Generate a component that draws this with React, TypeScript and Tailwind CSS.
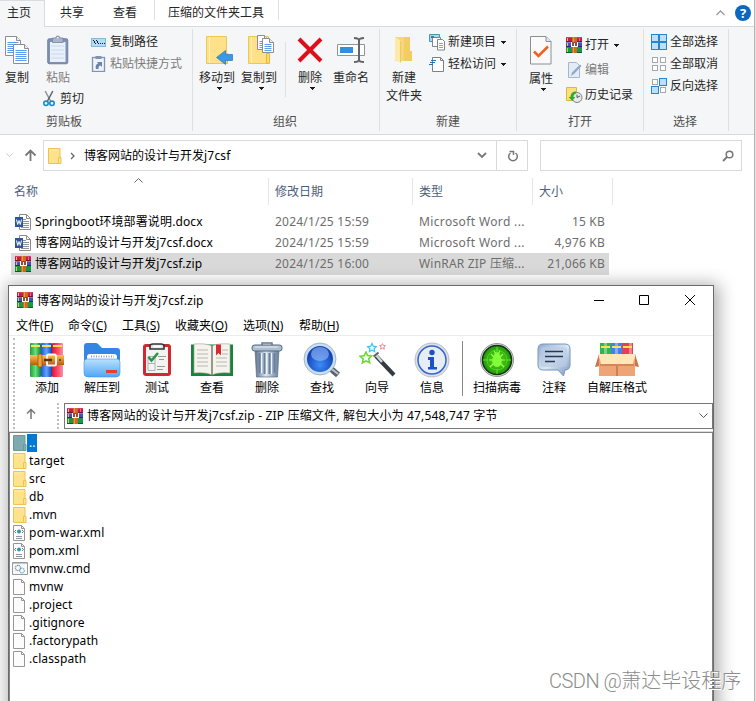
import type { ReactNode } from "react";

type IconProps = { className?: string };

/* ---------- shared glyphs ---------- */

function Books({ className = "" }: IconProps) {
  return (
    <svg width="16" height="16" viewBox="0 0 16 16" className={"shrink-0 " + className} shapeRendering="crispEdges">
      <rect y="0" width="16" height="5" fill="#c21d4c" />
      <rect y="0" width="16" height="1" fill="#d94067" />
      <rect y="5" width="16" height="5" fill="#4b4fb8" />
      <rect y="5" width="16" height="1" fill="#7a7edb" />
      <rect y="10" width="16" height="6" fill="#16994a" />
      <rect y="15" width="16" height="1" fill="#0b5a2b" />
      <rect y="4" width="16" height="1" fill="#7a1033" />
      <rect y="9" width="16" height="1" fill="#25286e" />
      <rect x="1" y="1" width="1" height="3" fill="#f2c14a" />
      <rect x="1" y="6" width="1" height="3" fill="#f2c14a" />
      <rect x="1" y="11" width="1" height="4" fill="#f2c14a" />
      <rect x="13" y="1" width="1" height="3" fill="#e56a86" />
      <rect x="6" y="0" width="5" height="16" fill="#cf6a20" />
      <rect x="7" y="0" width="1" height="16" fill="#e99a45" />
      <rect x="5" y="5" width="7" height="5" fill="#8a5138" />
      <path d="M5 5h1v5h-1zM11 5h1v5h-1zM8 6h1v3h-1zM6 9h5v1h-5z" fill="#fff" />
    </svg>
  );
}

function Folder({ w = 14, h = 16, teal = false }: { w?: number; h?: number; teal?: boolean }) {
  const fill = teal ? "#7fabb0" : "#ffe28c";
  const edge = teal ? "#6b9a95" : "#ecc453";
  return (
    <svg width={w} height={h} viewBox="0 0 14 16" className="shrink-0" preserveAspectRatio="none">
      <path d="M.5 .5h11.5v15H.5z" fill={fill} stroke={edge} />
      <path d="M10.5 9.5h2.5v6h-2.5z" fill={fill} stroke={edge} />
      {!teal && <path d="M1.5 1.5h9v1h-9z" fill="#ffedb0" />}
    </svg>
  );
}

function BigFolder({ children }: { children?: ReactNode }) {
  return (
    <svg width="28" height="32" viewBox="0 0 28 32" className="ml-[4px] shrink-0">
      <path d="M1.5 2.5h20v27h-20z" fill="#ffe18a" stroke="#edc850" />
      <path d="M4.5 3v26" stroke="#fff0bd" />
      <path d="M19.5 19.500h3v10h-3z" fill="#ffd968" stroke="#e5b93b" />
      {children}
    </svg>
  );
}

function Caret() {
  return (
    <svg width="5" height="3" viewBox="0 0 5 3" className="shrink-0" shapeRendering="crispEdges">
      <path d="M0 0h5v1H0zM1 1h3v1H1zM2 2h1v1H2z" fill="#1b1b1b" />
    </svg>
  );
}

function Sheet({ x, y, w = 15, h = 19 }: { x: number; y: number; w?: number; h?: number }) {
  const rows = [6.5, 8.5, 10.5, 12.5, 14.5, 16.5].filter((r) => r < h - 2);
  return (
    <g transform={`translate(${x} ${y})`}>
      <path d={`M.5 .5h${w - 5}l4 4v${h - 5}h-${w - 1}z`} fill="#fff" stroke="#8b8f95" />
      <path d={`M${w - 4.5} .5v4h4`} fill="#e9ebee" stroke="#8b8f95" />
      {rows.map((r) => (
        <path key={r} d={`M2.500 ${r}h${w - 5}`} stroke="#5b9cf0" />
      ))}
    </g>
  );
}

function CopyIcon() {
  return (
    <svg width="26" height="30" viewBox="0 0 26 30">
      <Sheet x={1} y={1} w={16} h={20} />
      <Sheet x={9} y={9} w={16} h={20} />
    </svg>
  );
}

function PasteIcon() {
  return (
    <svg width="22" height="30" viewBox="0 0 22 30">
      <rect x=".75" y="3.75" width="20" height="25" rx="1.5" fill="#7d91b8" stroke="#71819f" />
      <path d="M3 7h15.500v20H3z" fill="#e9f0fa" />
      <path d="M4 11h13M4 15h13M4 19h13M4 23h13" stroke="#d3deef" strokeWidth="1.5" />
      <path d="M5.500 3h3.300a2 2 0 0 1 4 0h3.300v4.500H5.500z" fill="#a9b7cc" stroke="#74839d" strokeWidth=".8" />
      <circle cx="10.800" cy="2.800" r=".8" fill="#fff" />
    </svg>
  );
}

function PathIcon() {
  return (
    <svg width="16" height="16" viewBox="0 0 16 16" shapeRendering="crispEdges">
      <rect x=".5" y="4.500" width="14" height="8" fill="#b3dcf8" stroke="#84b9dc" />
      <path d="M2 6h1v1h1v2h1v1H4V9H3V7H2zM5 6h1v1h1v2h1v1H7V9H6V7H5zM9 9h1v1H9zM11 9h1v1h-1zM13 9h1v1h-1z" fill="#16202b" />
    </svg>
  );
}

function ShortcutIcon() {
  return (
    <svg width="16" height="16" viewBox="0 0 16 16">
      <rect x="1.500" y="1.500" width="12" height="14" fill="#eef3fa" stroke="#8192b3" strokeWidth="1.300" />
      <path d="M4.500 0h6v3h-6z" fill="#8192b3" />
      <path d="M5 13c-.8-3 .2-5.500 2.500-5.500L6 6h5v5L9.500 9.500C8 9.500 7.500 11 7.500 13z" fill="#6d82ad" />
    </svg>
  );
}

function CutIcon() {
  return (
    <svg width="12" height="17" viewBox="0 0 12 17" fill="none">
      <path d="M2.200 1L7.500 11" stroke="#8b9299" strokeWidth="1.500" />
      <path d="M9.800 1L4.500 11" stroke="#59636d" strokeWidth="1.500" />
      <circle cx="3" cy="13.300" r="2.200" stroke="#1c8ac9" strokeWidth="1.600" />
      <circle cx="9" cy="13.300" r="2.200" stroke="#1c8ac9" strokeWidth="1.600" />
    </svg>
  );
}

function DeleteX() {
  return (
    <svg width="26" height="26" viewBox="0 0 26 26">
      <path d="M2 2L24 24M24 2L2 24" stroke="#dc0f1a" strokeWidth="4" />
    </svg>
  );
}

function RenameIcon() {
  return (
    <svg width="28" height="28" viewBox="0 0 28 28" fill="none">
      <path d="M.5 8.500h27v11H.5z" fill="#fff" stroke="#8f9499" />
      <path d="M3 11h13v6H3z" fill="#2e8fe3" />
      <path d="M22 3v22" stroke="#62666a" strokeWidth="2" />
      <path d="M17 2c3 0 5 .5 5 2.500 0-2 2-2.500 5-2.500M17 26c3 0 5-.5 5-2.500 0 2 2 2.500 5 2.500" stroke="#62666a" strokeWidth="2" />
    </svg>
  );
}

function NewFolderIcon() {
  return (
    <svg width="20" height="28" viewBox="0 0 20 28">
      <path d="M1 1h15v14h2v10H1z" fill="#f6d778" />
      <path d="M10 1h6v14h2v10h-8z" fill="#f2cd64" />
      <path d="M1 1l6 4v22l-6-3z" fill="#ffe9a9" />
      <path d="M6.500 5v21.500" stroke="#e9c258" strokeWidth=".8" />
    </svg>
  );
}

function NewItemIcon() {
  return (
    <svg width="17" height="17" viewBox="0 0 17 17">
      <path d="M.5 .5h10v7H.5z" fill="#a9d8ea" stroke="#4b93b4" />
      <path d="M3.500 3.500h8v9h-8z" fill="#fff" stroke="#7f858b" />
      <path d="M8.500 5.500h5l2 2v8.500h-7z" fill="#fff" stroke="#7f858b" />
      <path d="M10 9.500h4M10 11.500h4M10 13.500h4" stroke="#d58888" />
      <path d="M2 2h3v2H2z" fill="#347d9d" />
    </svg>
  );
}

function EasyAccessIcon() {
  return (
    <svg width="17" height="17" viewBox="0 0 17 17" fill="none">
      <path d="M3.500 1.500h8l3 3v11h-11z" fill="#fff" stroke="#7c8187" />
      <path d="M11.500 1.500v3h3" stroke="#7c8187" />
      <path d="M2 4.500h5M1 6.500h5M0 8.500h4" stroke="#2373b9" />
    </svg>
  );
}

function PropertiesIcon() {
  return (
    <svg width="22" height="29" viewBox="0 0 22 29" fill="none">
      <path d="M.5 .5h15.500l5 5v22.500H.5z" fill="#fafafa" stroke="#8b8e92" />
      <path d="M16 .5v5h5" fill="#e4e6e8" stroke="#8b8e92" />
      <path d="M4 15.500l4.500 4.500L18 10.500" stroke="#f1621e" strokeWidth="2.600" />
    </svg>
  );
}

function EditIcon() {
  return (
    <svg width="16" height="16" viewBox="0 0 16 16" fill="none" className="ml-[1px]">
      <path d="M1.500 .5h8l3 3v12h-11z" fill="#e4ebf5" stroke="#a5b6cf" />
      <path d="M14.500 4L7 12l-3 2 1-3.500L13 2.500z" fill="#93a8c9" />
    </svg>
  );
}

function HistoryIcon() {
  return (
    <svg width="17" height="16" viewBox="0 0 17 16">
      <path d="M.5 .5h10v13H.5z" fill="#fde07c" stroke="#dcb644" />
      <circle cx="11" cy="10.500" r="5" fill="#e7e9eb" stroke="#7e8387" />
      <path d="M11 7.500v3l3-1.500" fill="none" stroke="#50565b" />
      <path d="M10 4.500C6 4.500 4.500 7 4.500 10H2.500l3.800 4 3-4H7.500c0-2 1-3 2.500-3.500z" fill="#35a936" />
    </svg>
  );
}

const gridCells = [
  { on: [0.5, 0.5], off: [1.5, 1.5] },
  { on: [8.5, 0.5], off: [9.5, 1.5] },
  { on: [0.5, 8.5], off: [1.5, 9.5] },
  { on: [8.5, 8.5], off: [9.5, 9.5] },
];

function GridIcon({ on }: { on: boolean[] }) {
  const full = on.every(Boolean);
  return (
    <svg width="16" height="16" viewBox="0 0 16 16" shapeRendering="crispEdges">
      {gridCells.map((c, i) =>
        on[i] ? (
          <rect key={i} x={c.on[0]} y={c.on[1]} width={full ? 7 : 6.500} height={full ? 7 : 6.500} fill="#bce0fb" stroke="#2585cf" />
        ) : (
          <rect key={i} x={c.off[0]} y={c.off[1]} width="5" height="5" fill="#fff" stroke="#a5a9ad" />
        )
      )}
    </svg>
  );
}

function WordIcon() {
  return (
    <svg width="16" height="16" viewBox="0 0 16 16" className="shrink-0">
      <path d="M4.500 .5h7l4 4v11h-11z" fill="#fff" stroke="#8a8a8a" />
      <path d="M11.500 .5v4h4" fill="none" stroke="#8a8a8a" />
      <path d="M8 5.500h3M8 7.500h6M8 9.500h6M8 11.500h6M6 13.500h8" stroke="#8d949b" />
      <path d="M0 3h8v10H0z" fill="#2b579a" />
      <path d="M1.500 5.500l1.200 5L4 6.500l1.300 4 1.200-5" fill="none" stroke="#fff" />
    </svg>
  );
}

/* ---------- archive toolbar pictures ---------- */

function AddIcon() {
  return (
    <svg width="36" height="36" viewBox="0 0 36 36">
      <defs>
        <linearGradient id="bg"><stop stopColor="#1f9d3d" /><stop offset=".5" stopColor="#65e07a" /><stop offset="1" stopColor="#148034" /></linearGradient>
        <linearGradient id="bb"><stop stopColor="#1d55d9" /><stop offset=".5" stopColor="#5ea2ff" /><stop offset="1" stopColor="#1743b0" /></linearGradient>
        <linearGradient id="br"><stop stopColor="#d71533" /><stop offset=".5" stopColor="#ff4967" /><stop offset="1" stopColor="#f590b0" /></linearGradient>
        <linearGradient id="belt" x2="0" y2="1"><stop stopColor="#ffc251" /><stop offset="1" stopColor="#b65d11" /></linearGradient>
      </defs>
      <rect x="1" y="1" width="11" height="34" rx="1" fill="url(#bg)" />
      <rect x="12" y="1" width="11" height="34" rx="1" fill="url(#bb)" />
      <rect x="23" y="1" width="11" height="34" rx="1" fill="url(#br)" />
      <path d="M2 4h9M13 4h9M24 4h9" stroke="#ffe155" strokeWidth="2" />
      <path d="M1 13h34v10H1z" fill="url(#belt)" />
      <rect x="9" y="12" width="4" height="13" rx="1.500" fill="#f0a03a" stroke="#8d4a0c" strokeWidth=".6" />
      <rect x="18" y="12.500" width="9" height="11" rx="1.500" fill="none" stroke="#f5f5f5" strokeWidth="2" />
      <path d="M15 18h8" stroke="#5c3310" strokeWidth="2.500" />
      <circle cx="31" cy="18" r="1" fill="#5c3310" />
    </svg>
  );
}

function ExtractIcon() {
  return (
    <svg width="38" height="36" viewBox="0 0 38 36">
      <defs>
        <linearGradient id="fo" x2="0" y2="1"><stop stopColor="#b9e2fd" /><stop offset="1" stopColor="#4fa6f4" /></linearGradient>
      </defs>
      <path d="M1 4q0-3 3-3h9q2 0 4 3l2 2h15q3 0 3 3v15H1z" fill="#3585e5" />
      <path d="M4 15q0-3 3-3h24q3 0 3 3v4H4z" fill="#fff" />
      <path d="M8 14.500h23" stroke="#8fa0b4" strokeWidth="2" strokeDasharray="1 1.500" />
      <path d="M1 20q0-3 3-3h30q3 0 3 3v11q0 4-4 4H5q-4 0-4-4z" fill="url(#fo)" stroke="#3f94e6" strokeWidth=".6" />
      <rect x="23" y="28" width="11" height="3" fill="#e3412c" />
    </svg>
  );
}

function TestIcon() {
  return (
    <svg width="30" height="36" viewBox="0 0 30 36" fill="none">
      <rect x="1" y="2" width="28" height="32" rx="3" fill="#d32630" />
      <path d="M4 5h22v26H4z" fill="#f3f3f2" />
      <path d="M8 7V4q0-2 3-2h8q3 0 3 2v3z" fill="#dedede" stroke="#353638" strokeWidth="1.600" />
      <path d="M11 4.500h8" stroke="#fff" strokeWidth="2" />
      <path d="M6 14.500h7v7H6zM6 21.500h7v7H6z" stroke="#aeb1b2" />
      <path d="M6.500 15l3 3.500L16 11" stroke="#2c944a" strokeWidth="2.600" />
      <path d="M16 14.500h8M17 17.500h5M15 24.500h8M15 27.500h6" stroke="#97999a" />
    </svg>
  );
}

function ViewIcon() {
  return (
    <svg width="44" height="36" viewBox="0 0 44 36" fill="none">
      <path d="M1 2.500h42V34H1z" fill="#16843a" />
      <path d="M4 2q12-1 18 2 6-3 18-2v29q-12-1-18 2-6-3-18-2z" fill="#f4f3ed" stroke="#9f9c8f" strokeWidth=".6" />
      <path d="M22 4v29" stroke="#7b7768" strokeWidth="1.500" />
      <path d="M7 8h11M7 12h11M7 16h11M7 20h11M7 24h11M26 16h11M26 20h11M26 24h11M32 8h6M32 12h6" stroke="#b8b8b3" />
      <path d="M26 2.500h5v11l-2.500-2.500L26 13.500z" fill="#d62c31" />
    </svg>
  );
}

function TrashIcon() {
  return (
    <svg width="32" height="36" viewBox="0 0 32 36" fill="none">
      <defs>
        <linearGradient id="tr"><stop stopColor="#596f8c" /><stop offset=".45" stopColor="#dce7f1" /><stop offset="1" stopColor="#657c9a" /></linearGradient>
      </defs>
      <path d="M11 3V1h10v2" stroke="#66768a" strokeWidth="1.500" />
      <path d="M4 7h24l-1.500 28H5.500z" fill="url(#tr)" stroke="#5c6f86" strokeWidth=".7" />
      <path d="M8.500 11v20M13.500 11v21M18.500 11v21M23.500 11v20" stroke="#6b809a" strokeWidth="2" />
      <path d="M10.500 11v20M15.500 11v21M20.500 11v21" stroke="#eef5fb" />
      <rect x="1" y="3" width="30" height="6" rx="2.500" fill="#aebfd1" stroke="#52657c" />
      <path d="M4 5h23" stroke="#e7eef5" />
    </svg>
  );
}

function FindIcon() {
  return (
    <svg width="38" height="36" viewBox="0 0 38 36" fill="none">
      <defs>
        <radialGradient id="le" cy=".7"><stop stopColor="#3c8df7" /><stop offset="1" stopColor="#1643b8" /></radialGradient>
      </defs>
      <path d="M26 25l9 8" stroke="#58616c" strokeWidth="6" />
      <path d="M25 24l10 8" stroke="#bac3cd" strokeWidth="2" />
      <circle cx="17" cy="17" r="14.500" fill="url(#le)" stroke="#c7dff0" strokeWidth="3" />
      <circle cx="17" cy="17" r="16" stroke="#939ead" strokeWidth=".7" />
      <ellipse cx="17" cy="12" rx="9" ry="7" fill="#8fb9f6" opacity=".65" />
    </svg>
  );
}

function WizardIcon() {
  return (
    <svg width="38" height="36" viewBox="0 0 38 36" fill="none" className="ml-[2px]">
      <path d="M17 14l18 19" stroke="#353a3f" strokeWidth="4" />
      <path d="M17 13l6 7" stroke="#d5d8da" strokeWidth="2.500" />
      <path d="M14.500 14.500l5-4" stroke="#5c6268" strokeWidth="2" />
      <path d="M7 10l1.600 3.600 4 .4-2.900 2.800 1 4-3.700-1.900-3.600 2.100.8-4.100L1 14.200l4.200-.5z" fill="#f3fff2" stroke="#69d82f" strokeWidth="1.500" />
      <path d="M13 1.500l1.300 2.700 3 .4-2.200 2.100.6 3-2.700-1.400-2.700 1.400.6-3-2.200-2.100 3-.4z" fill="#edfcff" stroke="#46bce7" strokeWidth="1.200" />
      <path d="M23.500 1.500l.8 1.900 2.100.2-1.500 1.500.4 2.100-1.800-1-1.900 1 .4-2.100-1.500-1.500 2.100-.2z" fill="#fff1f1" stroke="#ee8d8d" />
    </svg>
  );
}

function InfoIcon() {
  return (
    <svg width="36" height="36" viewBox="0 0 36 36" fill="none">
      <circle cx="18" cy="18" r="17" fill="#dce1e8" stroke="#aab3bf" strokeWidth=".8" />
      <circle cx="18" cy="18" r="14" fill="#e6edf5" stroke="#3665c5" strokeWidth="1.500" />
      <circle cx="18" cy="10.500" r="2.700" fill="#1c51c3" />
      <path d="M14 15h6v10h3v2.500h-9V25h2v-7h-2z" fill="#1c51c3" />
    </svg>
  );
}

function VirusIcon() {
  return (
    <svg width="36" height="36" viewBox="0 0 36 36" fill="none">
      <defs><radialGradient id="vi"><stop stopColor="#58dd16" /><stop offset="1" stopColor="#1f9a0c" /></radialGradient></defs>
      <circle cx="18" cy="18" r="16.500" fill="#dadddf" stroke="#777c80" strokeWidth=".8" />
      <circle cx="18" cy="18" r="14.500" fill="url(#vi)" stroke="#173311" strokeWidth="1.600" />
      <circle cx="18" cy="18" r="10" stroke="#68d534" strokeWidth=".7" />
      <path d="M18 5v5M18 27v5M4 18h5M27 18h5" stroke="#65e32d" />
      <path d="M12 12l3 3M24 12l-3 3M10 18h4M26 18h-4M11 25l4-4M25 25l-4-4M15 9l2 3M21 9l-2 3" stroke="#9dff51" strokeWidth="1.200" />
      <ellipse cx="18" cy="19" rx="4.800" ry="6" fill="#82ff39" />
      <circle cx="18" cy="13" r="2.800" fill="#82ff39" />
    </svg>
  );
}

function CommentIcon() {
  return (
    <svg width="34" height="36" viewBox="0 0 34 36" fill="none">
      <defs><linearGradient id="co" x2="1" y2="1"><stop stopColor="#8fabd0" /><stop offset=".5" stopColor="#dce8f5" /><stop offset="1" stopColor="#7592bd" /></linearGradient></defs>
      <path d="M6 2h22q5 0 5 5v16q0 5-5 5l-1.500 6-5.500-6H6q-5 0-5-5V7q0-5 5-5z" fill="url(#co)" stroke="#7b96bb" />
      <rect x="4" y="5" width="26" height="20" rx="3" fill="#b9cbe2" opacity=".65" />
      <path d="M8 9.500h18M8 14.500h18M8 19.500h10" stroke="#273955" strokeWidth="1.500" />
    </svg>
  );
}

function SfxIcon() {
  return (
    <svg width="44" height="36" viewBox="0 0 44 36">
      <path d="M5 1h11v16H5z" fill="#2bb84b" />
      <path d="M16 1h11v16H16z" fill="#3f82ee" />
      <path d="M27 1h11v16H27z" fill="#e53f58" />
      <path d="M9 1h3v13H9zM20 1h3v13h-3zM34 1h3v13h-3z" fill="#fff" opacity=".35" />
      <path d="M6 5h9M17 5h9M28 5h9" stroke="#ffe057" strokeWidth="2" />
      <path d="M4 12L0 25l5-1zM40 12l4 13-5-1z" fill="#c7754f" />
      <path d="M4 17h36v17H4z" fill="#efa476" />
      <path d="M22 22v12" stroke="#a85d35" />
      <path d="M4 12h36l-2 10H6z" fill="#ffe7b7" />
      <path d="M5 22h34v2H5z" fill="#d48759" />
    </svg>
  );
}

/* ---------- ribbon building blocks ---------- */

function Small({ icon, label, caret, dim, className = "" }: { icon: ReactNode; label: string; caret?: boolean; dim?: boolean; className?: string }) {
  return (
    <div className={"flex h-[22px] items-center " + className}>
      <span className="flex w-[19px] shrink-0">{icon}</span>
      <span className={dim ? "text-[#7b7b7b]" : ""}>{label}</span>
      {caret && <span className="ml-[5px]"><Caret /></span>}
    </div>
  );
}

function Large({ icon, label, caret, dim, className = "" }: { icon: ReactNode; label: ReactNode; caret?: boolean; dim?: boolean; className?: string }) {
  return (
    <div className={"flex shrink-0 flex-col items-center pt-[5px] " + className}>
      <span className="mb-[2px] flex h-[35px] items-center justify-center">{icon}</span>
      <span className={"text-center leading-[18px] " + (dim ? "text-[#7b7b7b]" : "")}>{label}</span>
      {caret && <span className="ml-[4px] flex"><Caret /></span>}
    </div>
  );
}

function Group({ label, className, labelClass = "", children }: { label: string; className: string; labelClass?: string; children: ReactNode }) {
  return (
    <div className={"mt-[2px] flex h-[102px] shrink-0 flex-col border-r border-[#dfe0e1] " + className}>
      <div className="-mt-[2px] flex h-[87px]">{children}</div>
      <div className={"h-[18px] text-center leading-[18px] text-[#4f4f4f] " + labelClass}>{label}</div>
    </div>
  );
}

function Ribbon() {
  return (
    <div className="flex h-[108px] border-b border-[#d9dadb] bg-[#f5f6f7]">
      <Group label="剪贴板" className="w-[193px]" labelClass="pr-[64px]">
        <Large icon={<CopyIcon />} label="复制" className="ml-1 w-[26px]" />
        <div className="ml-[13px] w-[48px]">
          <Large icon={<PasteIcon />} label="粘贴" dim className="w-[30px]" />
          <div className="flex h-[23px] items-center">
            <CutIcon /><span className="ml-[5px]">剪切</span>
          </div>
        </div>
        <div className="pt-[4px]">
          <Small icon={<PathIcon />} label="复制路径" />
          <Small icon={<ShortcutIcon />} label="粘贴快捷方式" dim />
        </div>
      </Group>
      <Group label="组织" className="w-[187px]" labelClass="pr-[2px]">
        <Large className="ml-[3px] w-[42px]" caret label="移动到" icon={
          <BigFolder><path d="M27.500 20.500v6h-7v4l-9-7 9-7v4z" fill="#3b98e8" stroke="#1d78c6" strokeWidth=".7" /></BigFolder>
        } />
        <Large className="w-[42px]" caret label="复制到" icon={
          <BigFolder><g transform="translate(10 0)"><Sheet x={0} y={1} w={12} h={15} /><Sheet x={5} y={4} w={12} h={15} /></g></BigFolder>
        } />
        <div className="mt-[15px] ml-[5px] h-[55px] w-px bg-[#dfe0e1]" />
        <Large className="ml-[9px] w-[30px]" caret label="删除" icon={<DeleteX />} />
        <Large className="ml-[5px] w-[42px]" label="重命名" icon={<RenameIcon />} />
      </Group>
      <Group label="新建" className="w-[137px]">
        <Large className="ml-[3px] w-[42px]" label={<>新建<br />文件夹</>} icon={<NewFolderIcon />} />
        <div className="ml-[4px] pt-[4px]">
          <Small icon={<NewItemIcon />} label="新建项目" caret />
          <Small icon={<EasyAccessIcon />} label="轻松访问" caret />
        </div>
      </Group>
      <Group label="打开" className="w-[127px]">
        <Large className="ml-[8px] w-[32px] pt-[6px]" caret label="属性" icon={<PropertiesIcon />} />
        <div className="ml-[9px] flex flex-col gap-[3px] pt-[7px]">
          <Small icon={<Books />} label="打开" caret />
          <Small icon={<EditIcon />} label="编辑" dim />
          <Small icon={<HistoryIcon />} label="历史记录" />
        </div>
      </Group>
      <Group label="选择" className="w-[85px]" labelClass="pr-[2px]">
        <div className="ml-[7px] pt-[4px]">
          <Small icon={<GridIcon on={[true, true, true, true]} />} label="全部选择" />
          <Small icon={<GridIcon on={[false, false, false, false]} />} label="全部取消" />
          <Small icon={<GridIcon on={[false, true, true, false]} />} label="反向选择" />
        </div>
      </Group>
    </div>
  );
}

function Tabs() {
  return (
    <div className="flex h-[27px] items-stretch leading-[25px]">
      <div className="w-[45px] border-t border-r border-[#dadbdc] bg-[#f5f6f7] pl-[7px] leading-[23px]">主页</div>
      <div className="flex flex-1 border-b border-[#dadbdc]">
        <span className="ml-[15px] w-[53px]">共享</span>
        <span className="w-[41px]">查看</span>
        <span className="h-[20px] w-[125px] border-x border-[#dfdfdf] pl-[13px] whitespace-nowrap">压缩的文件夹工具</span>
        <div className="ml-auto flex items-center gap-[10px] pr-[3px]">
          <svg width="9" height="6" viewBox="0 0 9 6" fill="none"><path d="M.5 5l4-4 4 4" stroke="#9a9a9a" strokeWidth="1.300" /></svg>
          <span className="flex h-4 w-4 items-center justify-center rounded-full bg-[#0b68c1] text-[13px] leading-4 font-bold text-white">?</span>
        </div>
      </div>
    </div>
  );
}

function AddressBar() {
  return (
    <div className="flex h-[42px] pt-[5px]">
      <div className="flex h-[31px] w-[43px] items-center pl-[6px]">
        <svg width="7" height="5" viewBox="0 0 7 5" fill="none"><path d="M.5 .5l3 3 3-3" stroke="#c8c8c8" /></svg>
        <svg width="13" height="13" viewBox="0 0 13 13" fill="none" className="ml-[11px]"><path d="M6.500 12V2M1.500 6.500l5-5 5 5" stroke="#777" strokeWidth="1.800" /></svg>
      </div>
      <div className="flex h-[31px] w-[485px] items-center border border-[#d9d9d9] pl-[4px]">
        <Folder />
        <svg width="5" height="8" viewBox="0 0 5 8" fill="none" className="ml-[8px]"><path d="M1 1l3 3-3 3" stroke="#666" strokeWidth="1.300" /></svg>
        <span className="ml-[9px] text-black">博客网站的设计与开发<span className="tracking-[.2px]">j7csf</span></span>
        <svg width="10" height="7" viewBox="0 0 10 7" fill="none" className="mr-[9px] ml-auto"><path d="M1 1l4 4 4-4" stroke="#777" strokeWidth="1.800" /></svg>
        <div className="flex h-full w-[31px] items-center justify-center border-l border-[#d9d9d9] pl-[1px]">
          <svg width="12" height="12" viewBox="0 0 12 12" fill="none"><path d="M8.500 3A4.300 4.300 0 1 1 3.500 3M2.500 1.500h4v3.500" stroke="#777" strokeWidth="1.500" /></svg>
        </div>
      </div>
      <div className="ml-[12px] flex h-[31px] w-[202px] items-center justify-end border border-[#d9d9d9] pr-[7px]">
        <svg width="12" height="12" viewBox="0 0 12 12" fill="none"><circle cx="7.500" cy="4.500" r="3.300" stroke="#777" strokeWidth="1.500" /><path d="M5 7L1 11" stroke="#777" strokeWidth="1.800" /></svg>
      </div>
    </div>
  );
}

const files = [
  { name: "Springboot环境部署说明.docx", date: "2024/1/25 15:59", type: "Microsoft Word ...", size: "15 KB", zip: false },
  { name: "博客网站的设计与开发j7csf.docx", date: "2024/1/25 15:59", type: "Microsoft Word ...", size: "4,976 KB", zip: false },
  { name: "博客网站的设计与开发j7csf.zip", date: "2024/1/25 16:00", type: "WinRAR ZIP 压缩...", size: "21,066 KB", zip: true },
];

function FileTable() {
  return (
    <div className="text-[#6d6d6d]">
      <div className="mt-[1px] flex h-[27px] leading-[27px] text-[#4c607a]">
        <div className="flex w-[269px] border-r border-[#e5e5e5] pl-[14px]">
          <span>名称</span>
          <svg width="9" height="5" viewBox="0 0 9 5" fill="none" className="ml-[96px]"><path d="M.5 4.500l4-4 4 4" stroke="#6c6c6c" /></svg>
        </div>
        <div className="w-[144px] border-r border-[#e5e5e5] pl-[6px]">修改日期</div>
        <div className="w-[120px] border-r border-[#e5e5e5] pl-[6px]">类型</div>
        <div className="w-[80px] border-r border-[#e5e5e5] pl-[6px]">大小</div>
      </div>
      <div className="ml-[11px] w-[598px] pt-[6px]">
        {files.map((f) => (
          <div key={f.name} className={"flex items-center whitespace-nowrap " + (f.zip ? "h-[22px] bg-[#d9d9d9]" : "h-[21px]")}>
            <div className="flex w-[264px] items-center pl-[4px] text-black">
              {f.zip ? <Books className="-mt-px" /> : <WordIcon />}
              <span className="ml-[4px] tracking-[.13px]">{f.name}</span>
            </div>
            <span className="w-[144px] tracking-[.22px]">{f.date}</span>
            <span className={"w-[116px] " + (f.zip ? "tracking-[.2px]" : "tracking-[.36px]")}>{f.type}</span>
            <span className="w-[70px] text-right tracking-[.2px]">{f.size}</span>
          </div>
        ))}
      </div>
    </div>
  );
}

/* ---------- archive window ---------- */

const menus = [
  { t: "文件", k: "F", c: "w-[52px]" },
  { t: "命令", k: "C", c: "w-[54px]" },
  { t: "工具", k: "S", c: "w-[53px]" },
  { t: "收藏夹", k: "O", c: "w-[68px]" },
  { t: "选项", k: "N", c: "w-[56px]" },
  { t: "帮助", k: "H", c: "w-[54px]" },
];

const tools = [
  { t: "添加", i: <AddIcon />, c: "w-[54px]" },
  { t: "解压到", i: <ExtractIcon />, c: "w-[56px]" },
  { t: "测试", i: <TestIcon />, c: "w-[54px]" },
  { t: "查看", i: <ViewIcon />, c: "w-[56px]" },
  { t: "删除", i: <TrashIcon />, c: "w-[54px]" },
  { t: "查找", i: <FindIcon />, c: "w-[56px]" },
  { t: "向导", i: <WizardIcon />, c: "w-[54px]" },
  { t: "信息", i: <InfoIcon />, c: "w-[56px]" },
];

function Tool({ t, i, c }: { t: string; i: ReactNode; c: string }) {
  return (
    <div className={"flex shrink-0 flex-col items-center pt-[6px] " + c}>
      <span className="flex h-[37px]">{i}</span>
      <span className="leading-[18px]">{t}</span>
    </div>
  );
}

function PageIcon({ kind }: { kind: "plain" | "xml" | "cmd" }) {
  if (kind === "cmd")
    return (
      <svg width="16" height="14" viewBox="0 0 16 14" className="-ml-px shrink-0" fill="none">
        <path d="M.5 .5h15v12H.5z" fill="#f8f9fa" stroke="#969a9e" />
        <path d="M1 1.500h14" stroke="#bfc6ca" />
        <circle cx="6" cy="6" r="2.600" stroke="#858b91" strokeWidth="1.300" strokeDasharray="1.200 .6" />
        <circle cx="10" cy="8.500" r="2.300" stroke="#73add0" strokeWidth="1.300" strokeDasharray="1.200 .6" />
      </svg>
    );
  return (
    <svg width="14" height="16" viewBox="0 0 14 16" className="shrink-0" fill="none">
      <path d="M.5 .5h8l3 3v12H.5z" fill="#fcfcfc" stroke="#969696" />
      <path d="M8.500 .5v3h3" stroke="#969696" />
      {kind === "xml" && (
        <>
          <circle cx="6" cy="6.500" r="2" fill="#2c9aa2" />
          <path d="M3 5l-1.500 1.500L3 8M9 5l1.500 1.500L9 8" stroke="#6b7380" />
          <path d="M3 11.500h6M3 13.500h6" stroke="#8f8fa6" />
        </>
      )}
    </svg>
  );
}

const entries: { n: string; k: "dir" | "plain" | "xml" | "cmd"; c: string }[] = [
  { n: "target", k: "dir", c: "tracking-[.17px]" },
  { n: "src", k: "dir", c: "tracking-[.2px]" },
  { n: "db", k: "dir", c: "tracking-[.2px]" },
  { n: ".mvn", k: "dir", c: "" },
  { n: "pom-war.xml", k: "xml", c: "tracking-[.25px]" },
  { n: "pom.xml", k: "xml", c: "tracking-[.05px]" },
  { n: "mvnw.cmd", k: "cmd", c: "" },
  { n: "mvnw", k: "plain", c: "" },
  { n: ".project", k: "plain", c: "tracking-[.1px]" },
  { n: ".gitignore", k: "plain", c: "tracking-[.1px]" },
  { n: ".factorypath", k: "plain", c: "tracking-[.08px]" },
  { n: ".classpath", k: "plain", c: "tracking-[.1px]" },
];

function ArchiveWindow() {
  return (
    <div className="absolute top-[285px] left-[8px] flex h-[440px] w-[706px] flex-col border border-[#6b6b6b] bg-white text-black shadow-[2px_2px_16px_3px_rgba(0,0,0,0.32)]">
      <div className="flex h-[29px] shrink-0 items-center pl-[8px]">
        <Books className="-mt-px" /><span className="ml-[4px] tracking-[.1px]">博客网站的设计与开发j7csf.zip</span>
        <svg width="102" height="12" viewBox="0 0 102 12" className="-mt-px mr-[17px] ml-auto" fill="none" stroke="#000">
          <path d="M0 6.500h10M45.500 1.500h9v9h-9zM91 1l10 10M101 1L91 11" />
        </svg>
      </div>
      <div className="flex h-[21px] shrink-0 items-center border-b border-[#ececec] pt-px pl-[7px] whitespace-nowrap">
        {menus.map((m) => (
          <span key={m.k} className={m.c}>{m.t}(<u className="underline-offset-1">{m.k}</u>)</span>
        ))}
      </div>
      <div className="flex h-[65px] shrink-0">
        <div className="mt-[2px] ml-[4px] w-0 border-l-2 border-dotted border-[#bdbdbd]" />
        <div className="ml-[5px] flex">
          {tools.map((x) => <Tool key={x.t} {...x} />)}
        </div>
        <div className="mt-[5px] ml-[2px] h-[55px] w-px bg-[#888]" />
        <Tool t="扫描病毒" i={<VirusIcon />} c="w-[68px]" />
        <Tool t="注释" i={<CommentIcon />} c="w-[46px]" />
        <Tool t="自解压格式" i={<SfxIcon />} c="w-[80px]" />
      </div>
      <div className="flex h-[30px] shrink-0">
        <div className="mt-[2px] ml-[4px] h-[26px] border-l-2 border-dotted border-[#bdbdbd]" />
        <svg width="10" height="12" viewBox="0 0 10 12" className="mt-[7px] ml-[11px]" fill="none"><path d="M5 11V1.500M1 5.500l4-4 4 4" stroke="#777" strokeWidth="1.500" /></svg>
        <div className="mt-[2px] ml-[21px] h-[26px] border-l-2 border-dotted border-[#bdbdbd]" />
        <div className="mt-[2px] ml-[5px] flex h-[26px] flex-1 items-center border border-[#777] pl-[2px]">
          <Books /><span className="ml-[4px] tracking-[.17px]">博客网站的设计与开发j7csf.zip - ZIP 压缩文件, 解包大小为 47,548,747 字节</span>
          <svg width="9" height="6" viewBox="0 0 9 6" fill="none" className="mr-[4px] ml-auto"><path d="M.5 .5l4 4 4-4" stroke="#555" /></svg>
        </div>
      </div>
      <div className="h-px shrink-0 bg-[#dcdcdc]" />
      <div className="flex-1 border-t border-r border-l border-[#828282] pt-px pl-[3px]">
        <div className="flex h-[18px] items-center">
          <Folder teal />
          <span className="h-[18px] w-[10px] bg-[#0078d7] pl-[2px] leading-[18px] text-white">..</span>
        </div>
        {entries.map((e) => (
          <div key={e.n} className="flex h-[18px] items-center">
            <span className="flex w-[16px]">{e.k === "dir" ? <Folder /> : <PageIcon kind={e.k} />}</span>
            <span className={e.c}>{e.n}</span>
          </div>
        ))}
      </div>
    </div>
  );
}

export default function App() {
  return (
    <div className="relative h-[701px] w-[756px] overflow-hidden bg-[#e3e3e3] font-['Noto_Sans','Noto_Sans_CJK_SC',sans-serif] text-[12px] leading-[18px] text-[#262626]">
      <div className="h-full w-[755px] border-r border-[#b4b4b4] bg-white">
        <Tabs />
        <Ribbon />
        <AddressBar />
        <FileTable />
      </div>
      <ArchiveWindow />
      <div className="absolute top-[667px] left-[549px] font-['Roboto','Noto_Sans_CJK_SC',sans-serif] text-[20px] leading-[28px] font-light whitespace-nowrap text-[#8c8c8c] [text-shadow:1px_1px_0_#fff]"><span className="tracking-[-.5px]">CSDN @</span>萧达毕设程序</div>
    </div>
  );
}
